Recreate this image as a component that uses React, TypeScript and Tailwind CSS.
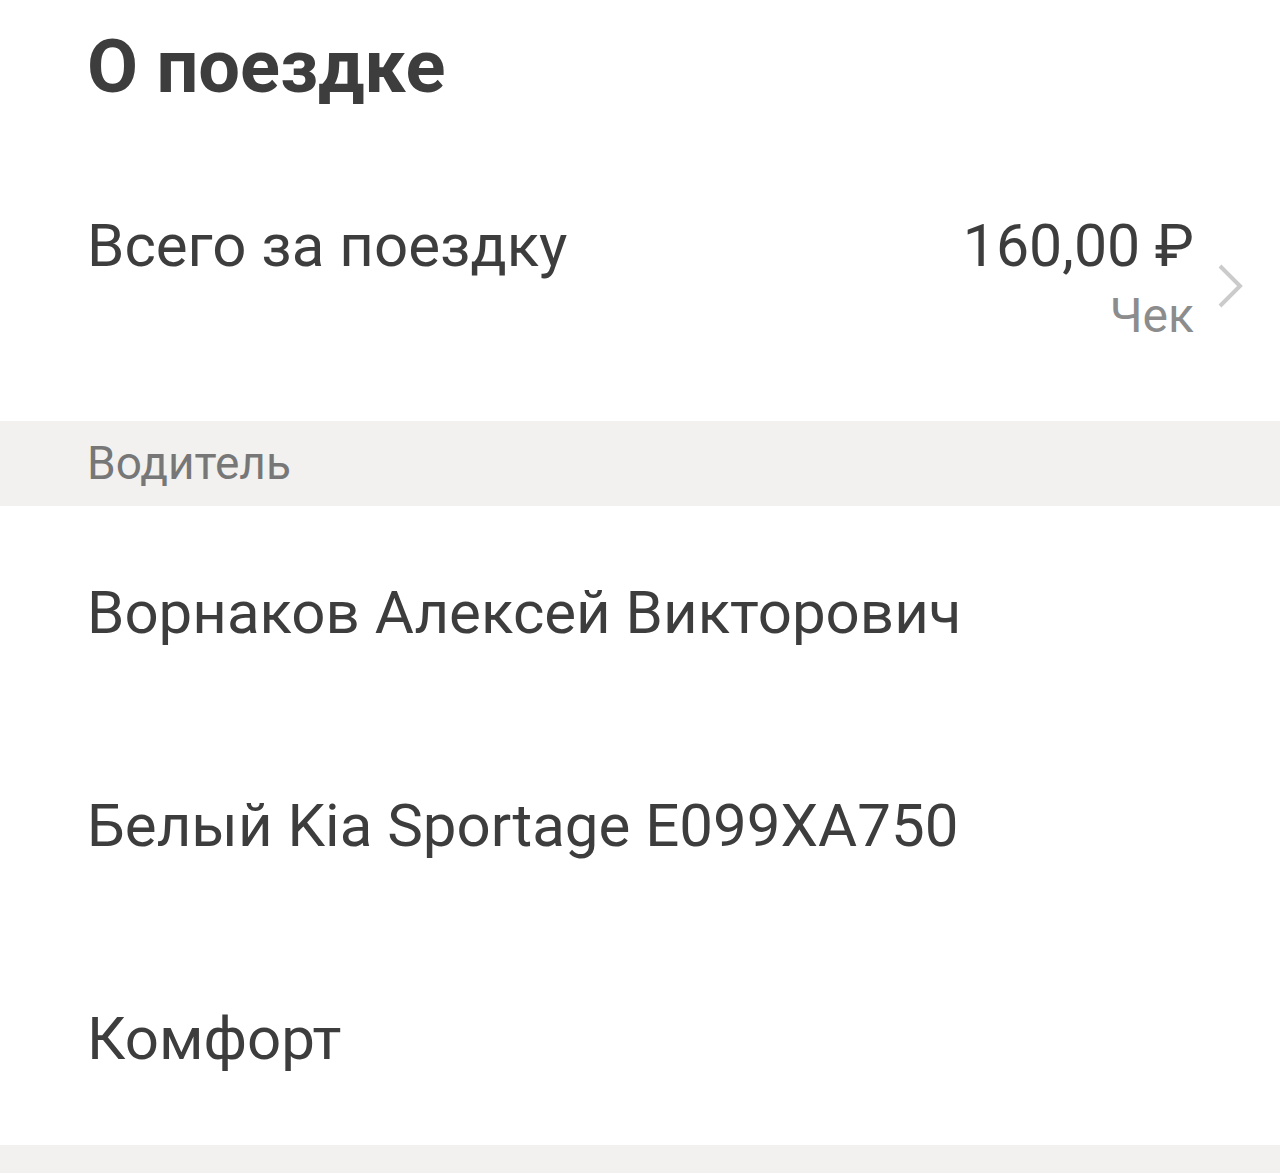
const ROWS = [
  "Ворнаков Алексей Викторович",
  "Белый Kia Sportage E099XA750",
  "Комфорт",
];

export default function App() {
  return (
    <div className="w-[1280px] h-[1173px] overflow-hidden bg-white font-['Roboto',sans-serif] text-[#3d3d3d]">
      <h1 className="h-[134px] pl-[87px] pt-[22px] text-[74px] font-bold leading-[90px]">
        О поездке
      </h1>

      {/* Итог */}
      <div className="h-[287px] flex items-start pl-[87px] pr-[36px] pt-[80px]">
        <div className="flex-1 text-[60px] leading-[64px]">Всего за поездку</div>
        <div className="flex flex-col items-end">
          <span className="text-[59px] leading-[64px]">160,00 ₽</span>
          <span className="mt-[10px] text-[48px] leading-[56px] text-[#8c8c8c]">Чек</span>
        </div>
        <svg className="ml-[22px] mt-[48px]" width="28" height="48" viewBox="0 0 28 48" fill="none">
          <path d="M4 4 L24 24 L4 44" stroke="#cbcbcb" strokeWidth="4" />
        </svg>
      </div>

      <div className="h-[85px] bg-[#f2f1ef] pl-[87px] flex items-center text-[46px] text-[#777777]">
        Водитель
      </div>

      {ROWS.map((r) => (
        <div key={r} className="h-[213px] pl-[87px] flex items-center text-[60px]">
          {r}
        </div>
      ))}

      <div className="h-[40px] bg-[#f2f1ef]" />
    </div>
  );
}
